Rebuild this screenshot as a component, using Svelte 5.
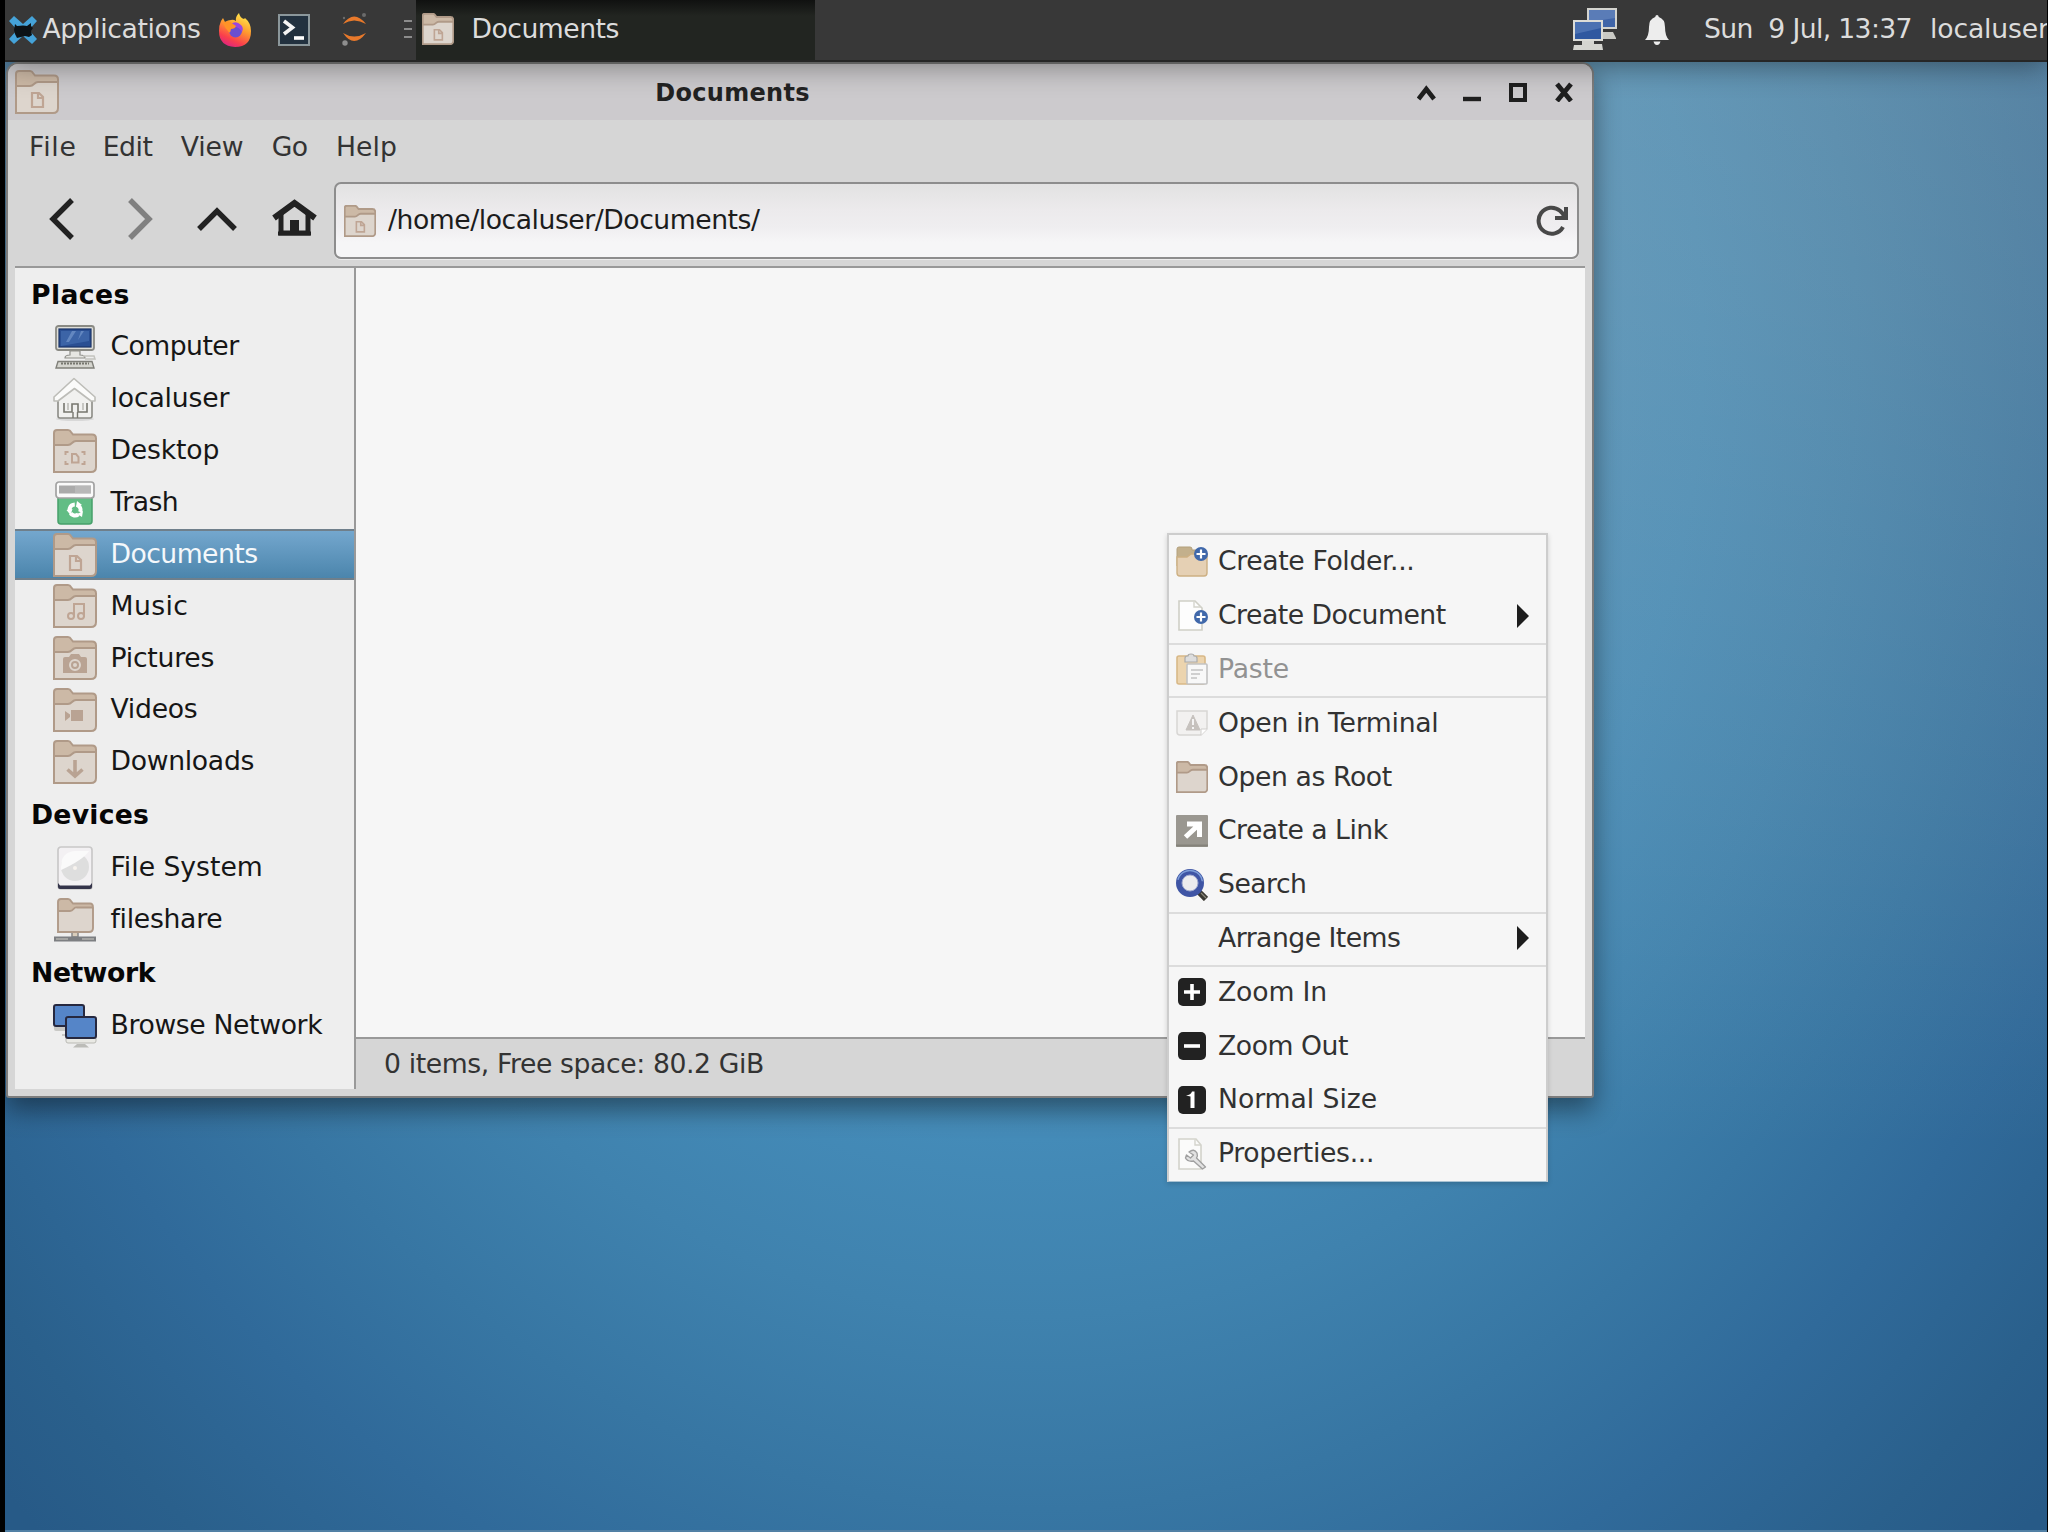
<script>
  // Spaces the letters of a label so that its drawn ink spans the given width.
  function fit(node, width) {
    const ctx = document.createElement('canvas').getContext('2d');
    const css = getComputedStyle(node);
    const text = node.textContent;
    ctx.font = `${css.fontWeight} ${css.fontSize} ${css.fontFamily}`;
    const m = ctx.measureText(text);
    const ink = m.actualBoundingBoxLeft + m.actualBoundingBoxRight;
    node.style.letterSpacing = `${(width - ink) / (text.length - 1)}px`;
  }

  const menubar = [
    { label: 'File', w: 43.5, pad: 26 },
    { label: 'Edit', w: 47.8, pad: 28.4 },
    { label: 'View', w: 62, pad: 28.2 },
    { label: 'Go', w: 34, pad: 28.6 },
    { label: 'Help', w: 58, pad: 28 }
  ];

  const sections = [
    {
      title: 'Places', w: 95.4,
      rows: [
        { label: 'Computer', icon: 'computer', w: 127.7 },
        { label: 'localuser', icon: 'home', w: 117 },
        { label: 'Desktop', icon: 'folder', glyph: 'desktop', w: 106 },
        { label: 'Trash', icon: 'trash', w: 67.3 },
        { label: 'Documents', icon: 'folder', glyph: 'doc', w: 144.7, selected: true },
        { label: 'Music', icon: 'folder', glyph: 'music', w: 73.7 },
        { label: 'Pictures', icon: 'folder', glyph: 'camera', w: 101 },
        { label: 'Videos', icon: 'folder', glyph: 'video', w: 86.3 },
        { label: 'Downloads', icon: 'folder', glyph: 'down', w: 141 }
      ]
    },
    {
      title: 'Devices', w: 115,
      rows: [
        { label: 'File System', icon: 'disk', w: 148.3 },
        { label: 'fileshare', icon: 'share', w: 110.7 }
      ]
    },
    {
      title: 'Network', w: 123.7,
      rows: [{ label: 'Browse Network', icon: 'network', w: 210.7 }]
    }
  ];

  const menu = [
    { label: 'Create Folder...', icon: 'newfolder', w: 193.3 },
    { label: 'Create Document', icon: 'newdoc', w: 226.7, sub: true },
    { label: 'Paste', icon: 'paste', w: 67.7, sep: true, disabled: true },
    { label: 'Open in Terminal', icon: 'terminal', w: 217.3, sep: true },
    { label: 'Open as Root', icon: 'root', w: 172.7 },
    { label: 'Create a Link', icon: 'link', w: 169.7 },
    { label: 'Search', icon: 'search', w: 86 },
    { label: 'Arrange Items', icon: '', w: 182, sep: true, sub: true },
    { label: 'Zoom In', icon: 'zin', w: 106.3, sep: true },
    { label: 'Zoom Out', icon: 'zout', w: 129 },
    { label: 'Normal Size', icon: 'zone', w: 155.7 },
    { label: 'Properties...', icon: 'props', w: 152, sep: true }
  ];
</script>

{#snippet folder(size, glyph, sw)}
  <svg width={size} height={size} viewBox="0 0 44 44" fill="none">
    <path d="M1 43V4q0-3 3-3h11q2 0 3 2l2 2.500h19q4 0 4 4V38z" fill="#ccb9a6" />
    <path d="M1 43V16h14q2 0 4-2t4-2h20v26q0 5-5 5z" fill="#ddd5cd" />
    <path d="M1 43V4q0-3 3-3h11q2 0 3 2l2 2.500h19q4 0 4 4V38q0 5-5 5zM1 16h14q2 0 4-2t4-2h20" stroke="#b09a88" stroke-width={sw} />
    {#if glyph === 'doc'}
      <path d="M17 23h7l4 4v10H17zM23 23v5h5" stroke="#bfa594" stroke-width="2.200" />
    {:else if glyph === 'desktop'}
      <path d="M12.500 26v-3h3M28.500 23h3v3M12.500 32v3h3M28.500 35h3v-3" stroke="#bfa594" stroke-width="2" />
      <path d="M19 25h4l2.500 3v5.500H19z" stroke="#bfa594" stroke-width="2" />
    {:else if glyph === 'music'}
      <path d="M21 33V20h10v13" stroke="#bfa594" stroke-width="2" />
      <circle cx="18" cy="32" r="3" stroke="#bfa594" stroke-width="2" /><circle cx="28" cy="32" r="3" stroke="#bfa594" stroke-width="2" />
    {:else if glyph === 'camera'}
      <path d="M10 23q0-2 2-2h4l2-3h8l2 3h4q2 0 2 2v14H10z" fill="#b9a393" />
      <circle cx="22" cy="29" r="5" stroke="#ddd5cd" stroke-width="2" /><circle cx="22" cy="29" r="2" fill="#ddd5cd" />
    {:else if glyph === 'video'}
      <path d="M18 22h12v11H18zM12 23l5 3.500v2.500l-5 4z" fill="#b9a393" />
    {:else if glyph === 'down'}
      <path d="M22 20v16M14.500 29.500l7.500 6.500 7.500-6.500" stroke="#b9a393" stroke-width="3.600" />
    {/if}
  </svg>
{/snippet}

{#snippet placeIcon(row)}
  {#if row.icon === 'folder'}
    {@render folder(44, row.glyph, 2)}
  {:else if row.icon === 'computer'}
    <svg width="44" height="44" viewBox="0 0 44 44">
      <rect x="3" y="1" width="38" height="24" rx="2.500" fill="#deded8" stroke="#8a8a84" stroke-width="1.800" />
      <rect x="6" y="4" width="32" height="18" fill="#2a4f93" stroke="#1c3468" stroke-width="1.200" />
      <path d="M8 6h28v10L8 21z" fill="#4b76b8" opacity=".55" /><path d="M19 6h4l-7 11h-3zM28 6h3l-6 9z" fill="#89a9da" opacity=".5" />
      <path d="M17 26h10v4q5 0 5 3H12q0-3 5-3z" fill="#e6e6e2" stroke="#8f8f8a" stroke-width="1.200" />
      <path d="M30 31h11l1 3H32" fill="none" stroke="#c4c4bf" stroke-width="1.500" />
      <path d="M5 36.500h34l2 6.500H3z" fill="#d5d5cf" stroke="#80807a" stroke-width="1.400" /><path d="M8 38.500h28" stroke="#77776f" stroke-width="1.800" stroke-dasharray="2 1" />
    </svg>
  {:else if row.icon === 'home'}
    <svg width="44" height="44" viewBox="0 0 44 44">
      <ellipse cx="22" cy="42" rx="19" ry="2" fill="#d8d8d8" />
      <path d="M5 21L22 8l17 13v18q0 2-2 2H7q-2 0-2-2z" fill="#f1f1ef" stroke="#8b8b85" stroke-width="1.600" />
      <path d="M11 26v9h8v-8h6v8h9v-9" fill="none" stroke="#77776f" stroke-width="1.600" /><path d="M20 35v6M24.500 35v6" stroke="#77776f" stroke-width="1.400" /><path d="M15 26v7M30 26v7" stroke="#b5b5b0" stroke-width="1.400" />
      <path d="M1 20L21 1.500 42 20v4h-4L21.500 11.500 5 24H1z" fill="#fbfbfa" stroke="#bdbdb8" stroke-width="1.600" stroke-linejoin="round" />
    </svg>
  {:else if row.icon === 'trash'}
    <svg width="44" height="44" viewBox="0 0 44 44">
      <path d="M5 15h34v25q0 3-3 3H8q-3 0-3-3z" fill="#62bd85" stroke="#46a06a" stroke-width="1.500" />
      <rect x="3" y="1" width="38" height="16" rx="3" fill="#fafafa" stroke="#a2a2a2" stroke-width="1.700" />
      <rect x="6" y="4.500" width="32" height="8" fill="#aaa" /><path d="M22 4.500h16v8H22z" fill="#c2c2c2" opacity=".6" />
      <circle cx="22" cy="29" r="5.500" fill="none" stroke="#fff" stroke-width="4" stroke-dasharray="8.500 3" transform="rotate(-70 22 29)" />
      <path d="M24 20l5 4-6 2zM13.500 29l6-1-2 6zM30 30l-1 6-5-3z" fill="#fff" />
    </svg>
  {:else if row.icon === 'disk'}
    <svg width="44" height="44" viewBox="0 0 44 44">
      <rect x="5" y="1" width="34" height="42" rx="3" fill="#f3f1f3" stroke="#c9c8c8" stroke-width="1.700" />
      <path d="M5 37l2 2.500h30l2-2.500v4q0 2-2 2H7q-2 0-2-2z" fill="#34344a" />
      <circle cx="22" cy="21" r="14" fill="#dedede" /><path d="M8 21Q8 6 22 5h14Q30 14 8 24z" fill="#fafafa" /><circle cx="22" cy="22" r="2" fill="#f7f3ee" />
    </svg>
  {:else if row.icon === 'share'}
    <svg width="44" height="44" viewBox="0 0 44 44">
      <path d="M19 33h6v6h-6z" fill="#d9cdbb" stroke="#888" stroke-width="1.500" />
      <path d="M5 33V4q0-3 3-3h7q2 0 3 2l2 2.500h16q4 0 4 4V33z" fill="#ccb9a6" />
      <path d="M5 34V13h12q2 0 3.500-2t3.500-1.500h16V30q0 4-4 4z" fill="#ddd5cd" />
      <path d="M5 34V4q0-3 3-3h7q2 0 3 2l2 2.500h17q3 0 3 4V30q0 4-4 4zM5 13h12q2 0 3.500-2t3.500-1.500h16" fill="none" stroke="#b09a88" stroke-width="1.900" />
      <path d="M1 38.500h42v5H1z" fill="#7d7f82" /><path d="M3 41h12M29 41h12" stroke="#b3b3ae" stroke-width="1.500" />
    </svg>
  {:else if row.icon === 'network'}
    <svg width="44" height="44" viewBox="0 0 44 44">
      <path d="M1 22h14v5H3q-2 0-2-2zM9 30h6v2H9z" fill="#c9c9c6" />
      <rect x="1" y="1" width="30" height="21" rx="2" fill="#5585c8" stroke="#26283f" stroke-width="2" />
      <rect x="13" y="33" width="30" height="6" rx="2" fill="#e9e9e4" stroke="#b9b9b4" stroke-width="1" />
      <rect x="13" y="13" width="30" height="21" rx="2" fill="#5585c8" stroke="#26283f" stroke-width="2" />
      <path d="M24 40h8l4 3.500H20z" fill="#bcbcb8" />
    </svg>
  {/if}
{/snippet}

{#snippet plus(cx, cy)}
  <circle {cx} {cy} r="7" fill="#4068aa" />
  <path d="M{cx - 4.500} {cy}h9M{cx} {cy - 4.500}v9" stroke="#fff" stroke-width="2.200" />
{/snippet}

{#snippet menuIcon(name)}
  {#if name === 'root'}
    {@render folder(32, '', 2.500)}
  {:else}
    <svg width="32" height="32" viewBox="0 0 32 32">
      {#if name === 'newfolder'}
        <path d="M1 20V3q0-2 2-2h11q2 0 2 2v1h12v16z" fill="#c3b08c" stroke="#b3a07c" />
        <path d="M1 11h10l4-3h16v19q0 3-3 3H4q-3 0-3-3z" fill="#e5d0b4" stroke="#cdb083" stroke-width="1.400" />
        {@render plus(25, 8)}
      {:else if name === 'newdoc'}
        <path d="M3 1h16l7 7v22H3z" fill="#fdfdfd" stroke="#cfcfc6" stroke-width="1.600" /><path d="M18 1.500V7h7" fill="none" stroke="#d4d4cc" stroke-width="1.400" />
        {@render plus(25, 17)}
      {:else if name === 'paste'}
        <rect x="1" y="3" width="28" height="28" rx="2" fill="#ecd4ae" stroke="#d8b887" stroke-width="1.600" />
        <path d="M9 9V5q0-2 3-2 0-2 3-2t3 2q3 0 3 2v4z" fill="#ddd" stroke="#aaa" stroke-width="1.200" />
        <rect x="11" y="11" width="20" height="20" rx="1" fill="#f8f8f8" stroke="#c2c2c2" stroke-width="1.600" />
        <path d="M15 17h12M15 21h9M15 25h6" stroke="#c2c2c2" stroke-width="1.400" />
      {:else if name === 'terminal'}
        <path d="M1 4h30v18l-6 6H4q-3 0-3-3z" fill="#f2f1f0" stroke="#d8d6d4" stroke-width="1.500" /><path d="M31 22h-6v6" fill="#fff" stroke="#d0cecc" />
        <path d="M17 8l7 15H10z" fill="#c6c2be" stroke="#c6c2be" stroke-linejoin="round" /><path d="M17 12v6M17 20v2" stroke="#f4f4f4" stroke-width="2" />
      {:else if name === 'link'}
        <rect x="0" y="0" width="32" height="32" rx="1" fill="#9a9790" /><path d="M0 30.500h32" stroke="#85827b" stroke-width="2" />
        <path d="M11 9h12.500v13M22 10.500L9.500 22" fill="none" stroke="#fff" stroke-width="5" />
      {:else if name === 'search'}
        <path d="M23 23l7 7" stroke="#3a3832" stroke-width="6" /><path d="M25 24l5 5" stroke="#8a877c" stroke-width="1.200" />
        <circle cx="14" cy="14" r="11" fill="#ececee" stroke="#3f55a5" stroke-width="6" /><circle cx="14" cy="14" r="12.500" fill="none" stroke="#7d9ed8" stroke-width="1.500" stroke-dasharray="34 45" transform="rotate(195 14 14)" />
        <circle cx="14" cy="14" r="8" fill="none" stroke="#9fa9cf" stroke-width="1" />
      {:else if name === 'zin'}
        <rect x="2" y="2" width="28" height="28" rx="5" fill="#222" /><path d="M8 16h16M16 8v16" stroke="#fff" stroke-width="3.600" />
      {:else if name === 'zout'}
        <rect x="2" y="2" width="28" height="28" rx="5" fill="#222" /><path d="M8 16h16" stroke="#fff" stroke-width="3.600" />
      {:else if name === 'zone'}
        <rect x="2" y="2" width="28" height="28" rx="5" fill="#222" /><path d="M10 11.500q5-.5 6-4h2.500V24h-4V12.500z" fill="#fff" />
      {:else if name === 'props'}
        <path d="M3 1h17l5 6v24H3z" fill="#fbfbfa" stroke="#d3d3cb" stroke-width="1.600" /><path d="M19 1.500V7h6" fill="none" stroke="#d4d4cc" stroke-width="1.400" />
        <path d="M13 14q5-4 8 1 1 3-.5 5l9 9-3 2-9-8q-6 1-8-3l1-3 4 3 3-3z" fill="#e2e2e2" stroke="#a0a0a0" stroke-width="1.400" stroke-linejoin="round" />
      {/if}
    </svg>
  {/if}
{/snippet}

<div class="screen">
  <div class="desktop">
    <header class="panel">
      <svg class="xfce" width="28" height="30" viewBox="0 0 28 30">
        <path d="M0 6l5-5 9 8 9-8 5 5-8 9 8 9-5 5-9-8-9 8-5-5 8-9z" fill="#45a3d9" />
        <path d="M6 9l2 2q7-1 10 0l4-3v3l2 2-2 3 1 4-3 2-4-1-8 2-2-4-1-4z" fill="#0c1216" />
      </svg>
      <span class="apps" use:fit={157.5}>Applications</span>
      <svg class="fox" width="34" height="34" viewBox="0 0 34 34">
        <defs>
          <linearGradient id="flame" x1=".8" y1="0" x2=".35" y2="1"><stop offset="0" stop-color="#fff04f" /><stop offset=".45" stop-color="#ff9a2e" /><stop offset=".8" stop-color="#fa3f4c" /><stop offset="1" stop-color="#e0267d" /></linearGradient>
        </defs>
        <path d="M3 8l2-3 2 4q3-2 6-2 2-1 5 1-1-4 3-8 1 5 5 6l1-1q6 5 6 13 0 16-16 16Q1 33 1 18q0-6 2-10z" fill="url(#flame)" />
        <circle cx="17.500" cy="18" r="6.500" fill="#6a4fd0" /><path d="M13 11q5-4 10 1 3 3 1 7-3-5-7-5-3 0-4-3z" fill="#9a46e0" />
        <path d="M5 10q6-4 10 1l3 2q-1 3-5 3-1 6-3 2-3-3-5-8z" fill="#ff9327" />
      </svg>
      <svg class="term" width="32" height="32" viewBox="0 0 32 32">
        <rect x="1" y="1" width="30" height="30" fill="#22313f" stroke="#8b979b" stroke-width="2" /><path d="M6 7l8.500 6.500L6 20" fill="none" stroke="#f4f4f4" stroke-width="3.600" /><path d="M16 24h10" stroke="#fff" stroke-width="3.600" />
      </svg>
      <svg class="jup" width="26" height="34" viewBox="0 0 26 34">
        <path d="M1 11Q12 -4 24 11 12 4 1 11zM1 20Q12 36 24 20 12 27 1 20z" fill="#e8792b" />
        <circle cx="22" cy="2" r="2" fill="#6b6b6b" /><circle cx="2" cy="5" r="1.200" fill="#6b6b6b" /><circle cx="3" cy="30" r="2.700" fill="#8e8e8e" />
      </svg>
      <div class="grip"><i></i><i></i><i></i></div>
      <div class="task">
        {@render folder(32, 'doc', 2.500)}
        <span use:fit={145}>Documents</span>
      </div>
      <svg class="net" width="44" height="42" viewBox="0 0 44 42">
        <path d="M24 24h16l3 6v1H24z" fill="#c9c9c4" />
        <rect x="15" y="1" width="28" height="19" fill="#4065a8" stroke="#d4d4cf" stroke-width="2" /><path d="M16 2h26v8l-26 4z" fill="#6d8cc2" opacity=".6" />
        <path d="M9 32h12v4h8l1 6H0l1-5h8z" fill="#d5d5d0" />
        <rect x="1" y="13" width="28" height="19" fill="#2f58a0" stroke="#dcdcd7" stroke-width="2" /><path d="M2 14h26v6L2 26z" fill="#5f82be" opacity=".6" />
      </svg>
      <svg class="bell" width="24" height="30" viewBox="0 0 24 30">
        <path d="M12 0q1.500 0 1.800 2Q20 4 20 12q0 9 4 13H0q4-4 4-13 0-8 6.200-10Q10.500 0 12 0zM8.500 26.500h7q-1 3.500-3.500 3.500t-3.500-3.500z" fill="#ededed" />
      </svg>
      <span class="clock" use:fit={205.5}>Sun  9 Jul, 13:37</span>
      <span class="user" use:fit={117}>localuser</span>
    </header>

    <section class="window">
      <div class="titlebar">
        {@render folder(44, 'doc', 2)}
        <h1><span use:fit={152}>Documents</span></h1>
        <svg width="156" height="20" viewBox="0 0 156 20" fill="none" stroke="#1f1f1f">
          <path d="M1.500 17l7.800-10 7.800 10" stroke-width="4.600" /><path d="M46 17h18" stroke-width="4.400" /><rect x="94" y="3" width="14" height="15" stroke-width="4" /><path d="M140 2l14 17M154 2l-14 17" stroke-width="4.800" />
        </svg>
      </div>
      <nav class="menubar">
        {#each menubar as m}<span class="entry" style:padding-right="{m.pad}px" use:fit={m.w}>{m.label}</span>{/each}
      </nav>
      <div class="toolbar">
        <svg width="270" height="44" viewBox="0 0 270 44" fill="none" stroke="#222" stroke-width="5.400">
          <path d="M23 3L4 22l19 19" /><path d="M81 3l19 19-19 19" stroke="#808080" /><path d="M150 32l18-18 18 18" />
          <path d="M232 17v19h27V17" stroke-width="5" /><path d="M225 21l20.500-15 20.500 15" stroke-width="6" /><path d="M229 36.500h33" stroke-width="4" /><path d="M245.500 23v13" stroke-width="9" />
        </svg>
        <div class="path">
          {@render folder(32, 'doc', 2.500)}
          <span use:fit={372}>/home/localuser/Documents/</span>
          <svg width="34" height="32" viewBox="0 0 34 32"><path d="M27 22A13 13 0 1 1 24 5.800l4 4" fill="none" stroke="#484848" stroke-width="4" /><path d="M32 2v13H19v-4h6l3-3V2z" fill="#484848" /></svg>
        </div>
      </div>
      <div class="body">
        <aside>
          {#each sections as s}
            <h2><span use:fit={s.w}>{s.title}</span></h2>
            {#each s.rows as row}
              <div class="row" class:selected={row.selected}>
                {@render placeIcon(row)}
                <span use:fit={row.w}>{row.label}</span>
              </div>
            {/each}
          {/each}
        </aside>
        <div class="main">
          <div class="files"></div>
          <footer><span use:fit={378}>0 items, Free space: 80.2 GiB</span></footer>
        </div>
      </div>
    </section>

    <div class="context">
      {#each menu as item}
        <div class="item" class:sep={item.sep} class:disabled={item.disabled}>
          {@render menuIcon(item.icon)}
          <span use:fit={item.w}>{item.label}</span>
          {#if item.sub}<svg class="arrow" width="12" height="24" viewBox="0 0 12 24"><path d="M0 0l12 12L0 24z" fill="#1d1d1d" /></svg>{/if}
        </div>
      {/each}
    </div>
  </div>
</div>

<style>
  :global(body) { background: #000; overflow: hidden; }
  .screen {
    width: 2048px; height: 1532px; box-sizing: border-box; padding: 0 1px 0 5px;
    background: #000; font: 26.67px/1.2 "DejaVu Sans", sans-serif; color: #2b2b2b; overflow: hidden;
  }
  svg { flex: none; display: block; }
  span { white-space: pre; }
  .desktop {
    position: relative; height: 1532px; box-sizing: border-box; border-bottom: 2px solid #5180a5; overflow: hidden;
    background:
      linear-gradient(rgba(255, 215, 180, .18), rgba(255, 215, 180, .15) 300px, rgba(255, 215, 180, .07) 800px, rgba(255, 215, 180, 0) 1150px),
      radial-gradient(ellipse 1180px 1380px at 1025px 350px, #4a8fbb 45%, #448bb8 57%, #3f82ae 70%, #3776a3 84%, #306a9a 97%, #2a608c 111%, #275a87 120%);
  }
  .panel {
    position: relative; z-index: 2; height: 62px; box-sizing: border-box; padding: 0 0 2px 4px; border-bottom: 2px solid #262626;
    display: flex; align-items: center; background: #383838; color: #dcdcdc; box-shadow: 0 3px 30px rgba(0, 0, 0, .42);
  }
  .panel > span { padding-bottom: 1px; }
  .xfce { margin-right: 5.500px; margin-top: 1px; }
  .apps { width: 175px; }
  .fox { margin-top: 2px; }
  .term { margin: 2px 0 0 26px; }
  .jup { margin: 2px 0 0 32px; }
  .grip { margin: 0 4px 0 36px; display: grid; gap: 6px; }
  .grip i { width: 8px; height: 2px; background: #8c8c8c; }
  .task {
    align-self: stretch; margin-bottom: -2px; width: 399px; box-sizing: border-box; padding: 0 0 2px 6px; display: flex; align-items: center; gap: 18px;
    background: linear-gradient(#101110, #222521 16px);
  }
  .task span { padding-bottom: 1px; }
  .net { margin-left: auto; }
  .bell { margin: 2px 0 0 28px; }
  .clock { margin-left: 35px; width: 226px; }
  .user { width: 117px; }

  .window {
    position: absolute; left: 1px; top: 62px; width: 1588px; height: 1036px; box-sizing: border-box;
    display: flex; flex-direction: column; border: 2px solid #7d7d7d; border-radius: 12px 12px 3px 3px; background: #d6d6d6;
    padding: 0 7px 7px; box-shadow: 0 12px 26px rgba(0, 0, 0, .42);
  }
  .titlebar { height: 56px; margin: 0 -7px; padding: 0 19px 0 7px; display: flex; align-items: center; background: #cccacd; border-radius: 10px 10px 0 0; }
  h1 { flex: 1; margin: 0; padding: 2px 11px 0 0; text-align: center; font-size: 24px; line-height: 56px; color: #222; }
  .menubar { height: 52px; box-sizing: border-box; padding: 1px 0 0 14px; display: flex; align-items: center; color: #333; }
  .toolbar { height: 94px; flex: none; display: flex; padding-left: 34px; box-sizing: border-box; align-items: flex-start; }
  .toolbar > svg { margin-top: 25px; }
  .path {
    flex: 1; height: 77px; margin: 10px 6px 0 15px; box-sizing: border-box; border: 2px solid #8d8d8d; border-radius: 7px; padding: 0 7px 0 8px;
    display: flex; align-items: center; background: linear-gradient(#e2e2e2, #eceaec 35%, #efeef0 60%, #f6f6f7 80%); box-shadow: 0 1px 0 #ececec;
  }
  .path span { flex: 1; padding: 0 0 1px 12px; color: #1c1c1c; }
  .body { flex: 1; min-height: 0; display: flex; border-top: 2px solid #999; }
  aside { width: 339px; border-right: 2px solid #999; background: #eee; color: #161616; }
  h2 { height: 53px; box-sizing: border-box; margin: 0; padding-left: 16px; font-size: 26.67px; line-height: 53px; color: #060606; }
  .row + h2 { height: 54px; }
  .row { height: 51.9px; box-sizing: border-box; padding: 0 0 3px 38px; display: flex; align-items: center; gap: 13.500px; border: solid transparent; border-width: 2px 0; }
  .row svg { margin-top: 3px; }
  .row span { padding-top: 1.500px; }
  .row.selected { color: #f4f8fb; border-color: #6f7f8b; background: linear-gradient(#74a7ce, #4b85ac); }
  .main { flex: 1; display: flex; flex-direction: column; }
  .files { flex: 1; background: #f6f6f6; }
  footer { height: 52px; box-sizing: border-box; border-top: 2px solid #999; padding: 9px 0 0 28px; color: #333; }

  .context {
    position: absolute; z-index: 3; left: 1162px; top: 533px; width: 381px; box-sizing: border-box; border: 2px solid #cdcdcd; border-bottom: 1px solid #a9c2d2;
    background: #f6f6f6; color: #323232; box-shadow: 0 2px 5px rgba(0, 0, 0, .16);
  }
  .item { height: 53.8px; box-sizing: border-box; padding: 0 0 2px 7px; display: flex; align-items: center; border-top: 2px solid transparent; }
  .item.sep { border-top-color: #dcdcdc; }
  .item span { padding: 0 0 1px 10px; }
  .item.disabled { color: #929292; }
  .arrow { margin: 0 17px 0 auto; }
</style>
